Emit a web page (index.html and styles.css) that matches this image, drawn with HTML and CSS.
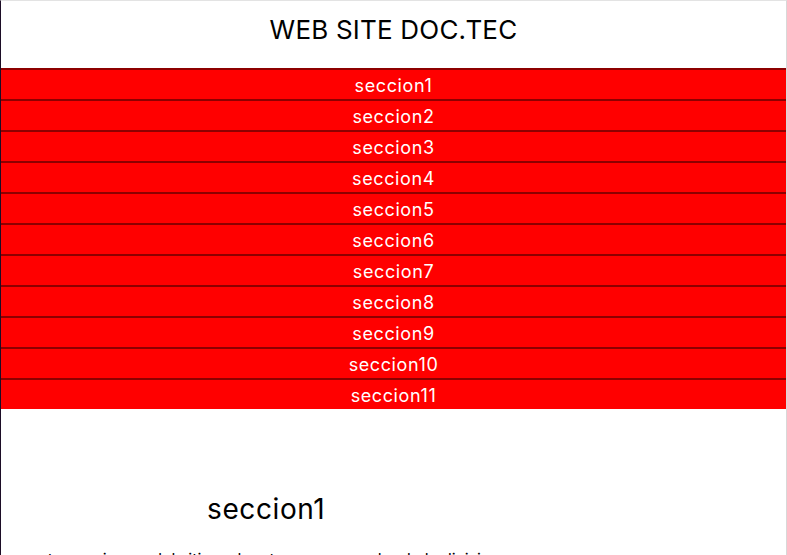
FILE: index.html
```html
<!DOCTYPE html>
<html lang="es">
<head>
<meta charset="utf-8">
<title>WEB SITE DOC.TEC</title>
<link rel="stylesheet" href="styles.css">
</head>
<body>
<div class="page">
  <header class="site-header">
    <h1 class="site-title">WEB SITE DOC.TEC</h1>
  </header>
  <nav class="nav">
    <ul class="nav-list">
      <li class="nav-item">seccion1</li>
      <li class="nav-item">seccion2</li>
      <li class="nav-item">seccion3</li>
      <li class="nav-item">seccion4</li>
      <li class="nav-item">seccion5</li>
      <li class="nav-item">seccion6</li>
      <li class="nav-item">seccion7</li>
      <li class="nav-item">seccion8</li>
      <li class="nav-item">seccion9</li>
      <li class="nav-item">seccion10</li>
      <li class="nav-item">seccion11</li>
    </ul>
  </nav>
  <main class="content">
    <section class="section">
      <h2 class="section-title">seccion1</h2>
      <p class="section-text">esta seccion es del sitio web esta es una prueba de la division del sitio para el contenido</p>
    </section>
  </main>
</div>
</body>
</html>
```
FILE: styles.css
```css
html, body {
  margin: 0;
  padding: 0;
  background: #ffffff;
}

body {
  font-family: "Inter", "Lato", sans-serif;
  color: #000000;
  overflow: hidden;
  height: 555px;
}

.page {
  border-top: 1px solid #e3e3e3;
  border-left: 1px solid #1c0d26;
  border-right: 1px solid #d8d8d8;
  min-height: 554px;
  box-sizing: border-box;
}

.site-header {
  height: 67px;
  display: flex;
  align-items: center;
  justify-content: center;
}

.site-title {
  margin: 0 0 9px 0;
  font-size: 26px;
  font-weight: 400;
  letter-spacing: 0.2px;
  line-height: 32px;
}

.nav-list {
  list-style: none;
  margin: 0;
  padding: 0;
}

.nav-item {
  background: #ff0000;
  color: #ffffff;
  border-top: 2px solid #8d0000;
  height: 29px;
  line-height: 31px;
  text-align: center;
  font-size: 18px;
  letter-spacing: 0.6px;
}

.section {
  padding-top: 84px;
}

.section-title {
  margin: 0;
  padding-left: 206px;
  font-size: 28px;
  font-weight: 400;
  letter-spacing: 0.6px;
  line-height: 32px;
}

.section-text {
  margin: 22px 0 0 0;
  padding-left: 29px;
  max-width: 470px;
  font-size: 16px;
  line-height: 24px;
}
```
